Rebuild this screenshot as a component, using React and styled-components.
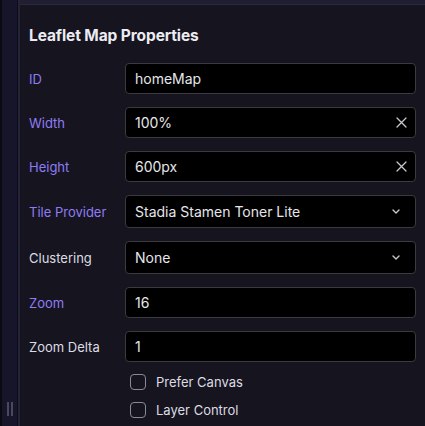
import React, { useState } from 'react';
import styled, { createGlobalStyle } from 'styled-components';

const GlobalStyle = createGlobalStyle`
  body {
    margin: 0;
    background: #16141f;
    font-family: Inter, "Noto Sans", sans-serif;
  }
`;

const Layout = styled.div`
  display: flex;
  height: 426px;
  overflow: hidden;
  background: #16141f;
`;

const SideStrip = styled.div`
  width: 17px;
  background: #17152a;
  border-left: 2px solid #0b0a12;
  box-sizing: border-box;
  display: flex;
  flex-direction: column;
  justify-content: flex-end;
  align-items: center;
  padding-bottom: 10px;
`;

const Grip = styled.div`
  display: flex;
  gap: 2px;

  span {
    width: 2px;
    height: 14px;
    background: #4a4860;
  }
`;

const Divider = styled.div`
  width: 3px;
  background: #25233a;
  border-left: 1px solid #0e0d16;
  box-sizing: border-box;
`;

const Panel = styled.div`
  flex: 1;
  display: flex;
  flex-direction: column;
`;

const TopBar = styled.div`
  height: 4px;
  background: #201e31;
  border-bottom: 1px solid #2a2840;
`;

const Content = styled.div`
  padding: 21px 9px 0 9px;
`;

const Title = styled.h2`
  margin: 0 0 17px 0;
  font-size: 15.5px;
  font-weight: 700;
  letter-spacing: -0.1px;
  color: #ececf2;
  line-height: 20px;
`;

const Form = styled.div`
  display: grid;
  grid-template-columns: 96px 1fr;
  row-gap: 13px;
  align-items: center;
`;

const Label = styled.label`
  font-size: 13px;
  color: ${props => (props.accent ? '#8e7cf5' : '#dcdce2')};
`;

const Field = styled.div`
  position: relative;
  height: ${props => (props.tall ? '33px' : '31px')};
  background: #000;
  border: 1px solid #3a3a40;
  border-radius: 4px;
  box-sizing: border-box;
  display: flex;
  align-items: center;
  padding: 0 9px;
  color: #e6e6ea;
  font-size: 14px;
`;

const Value = styled.span`
  flex: 1;
`;

const IconSlot = styled.span`
  display: flex;
  align-items: center;
  color: #c8c8d0;
  margin-right: ${props => props.right || '0px'};
`;

const Checks = styled.div`
  grid-column: 2;
  display: flex;
  flex-direction: column;
  gap: 12px;
  padding-left: 5px;
  margin-top: -1px;
`;

const CheckRow = styled.label`
  display: flex;
  align-items: center;
  gap: 10px;
  font-size: 13px;
  color: #dcdce2;
`;

const Box = styled.span`
  width: 16px;
  height: 16px;
  box-sizing: border-box;
  border: 1px solid #8a8a94;
  border-radius: 4px;
`;

const Clear = () => (
  <svg width="11" height="11" viewBox="0 0 11 11">
    <path d="M1 1L10 10M10 1L1 10" stroke="currentColor" strokeWidth="1.25" strokeLinecap="round" />
  </svg>
);

const Chevron = () => (
  <svg width="8" height="5" viewBox="0 0 8 5">
    <path d="M1 1L4 4L7 1" fill="none" stroke="currentColor" strokeWidth="1.4" strokeLinecap="round" strokeLinejoin="round" />
  </svg>
);

const fields = [
  { label: 'ID', value: 'homeMap', accent: true },
  { label: 'Width', value: '100%', accent: true, icon: 'clear' },
  { label: 'Height', value: '600px', accent: true, icon: 'clear' },
  { label: 'Tile Provider', value: 'Stadia Stamen Toner Lite', accent: true, icon: 'select' },
  { label: 'Clustering', value: 'None', icon: 'select' },
  { label: 'Zoom', value: '16', accent: true },
  { label: 'Zoom Delta', value: '1' },
];

function App() {
  const [checks] = useState([
    { label: 'Prefer Canvas', on: false },
    { label: 'Layer Control', on: false },
  ]);

  return (
    <Layout>
      <GlobalStyle />
      <SideStrip>
        <Grip><span /><span /></Grip>
      </SideStrip>
      <Divider />
      <Panel>
        <TopBar />
        <Content>
          <Title>Leaflet Map Properties</Title>
          <Form>
            {fields.map(f => (
              <React.Fragment key={f.label}>
                <Label accent={f.accent}>{f.label}</Label>
                <Field tall={f.icon === 'select'}>
                  <Value>{f.value}</Value>
                  {f.icon === 'clear' && <IconSlot right="-1px"><Clear /></IconSlot>}
                  {f.icon === 'select' && <IconSlot right="6px"><Chevron /></IconSlot>}
                </Field>
              </React.Fragment>
            ))}
            <Checks>
              {checks.map(c => (
                <CheckRow key={c.label}>
                  <Box />
                  {c.label}
                </CheckRow>
              ))}
            </Checks>
          </Form>
        </Content>
      </Panel>
    </Layout>
  );
}

export default App;
